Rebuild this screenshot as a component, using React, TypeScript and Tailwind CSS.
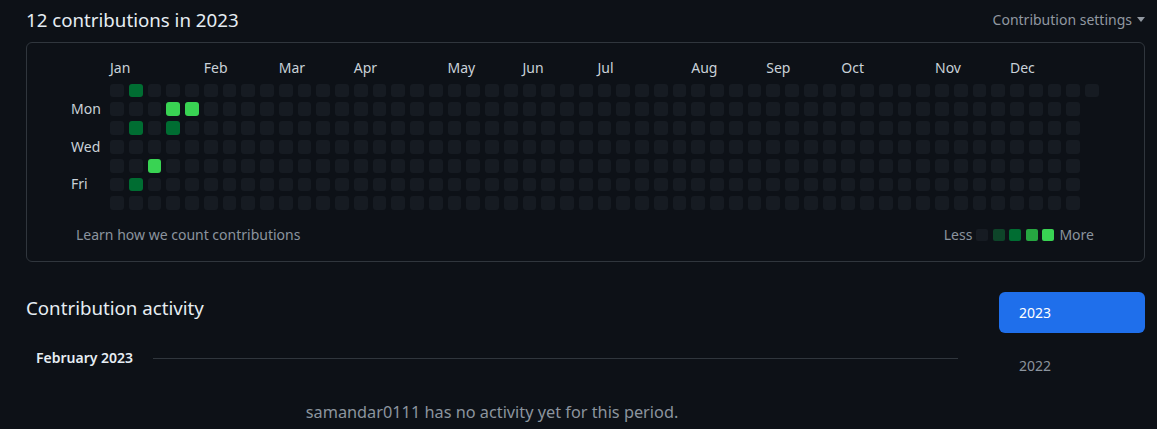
import * as React from 'react';

const MONTHS = [
    { name: 'Jan', col: 0 },
    { name: 'Feb', col: 5 },
    { name: 'Mar', col: 9 },
    { name: 'Apr', col: 13 },
    { name: 'May', col: 18 },
    { name: 'Jun', col: 22 },
    { name: 'Jul', col: 26 },
    { name: 'Aug', col: 31 },
    { name: 'Sep', col: 35 },
    { name: 'Oct', col: 39 },
    { name: 'Nov', col: 44 },
    { name: 'Dec', col: 48 },
];

const DAYS = ['', 'Mon', '', 'Wed', '', 'Fri', ''];

// week-day -> level
const activity: Record<string, number> = {
    '1-0': 2,
    '1-2': 2,
    '1-5': 2,
    '2-4': 4,
    '3-1': 4,
    '3-2': 2,
    '4-1': 4,
};

const levelClass = [
    'bg-[#161b22]',
    'bg-[#0e4429]',
    'bg-[#006d32]',
    'bg-[#26a641]',
    'bg-[#39d353]',
];

const WEEKS = 53;

export default function App() {
    const cells: React.ReactNode[] = [];
    for (let day = 0; day < 7; day++) {
        cells.push(
            <div key={'d' + day} className="text-[14px] leading-[14px] text-[#c9d1d9]">
                {DAYS[day]}
            </div>
        );
        for (let week = 0; week < WEEKS; week++) {
            // 2023 ends on Sunday, so the last week has one day only
            if (week === WEEKS - 1 && day > 0) {
                cells.push(<div key={week + '-' + day} />);
                continue;
            }
            const level = activity[week + '-' + day] ?? 0;
            cells.push(
                <div
                    key={week + '-' + day}
                    className={'w-[13.75px] h-[13.75px] rounded-[3px] ' + levelClass[level]}
                />
            );
        }
    }

    return (
        <div className="min-h-screen bg-[#0d1117] font-['Noto_Sans',sans-serif] pl-[26px] pr-[12px] text-[#c9d1d9]">
            {/* header */}
            <div className="flex items-center justify-between h-[38px] pt-[1px]">
                <h2 className="text-[18.7px] leading-[24px] text-[#e6edf3]">
                    12 contributions in 2023
                </h2>
                <button className="flex items-center gap-[5px] text-[14px] text-[#9198a1]">
                    Contribution settings
                    <svg width="8" height="5" viewBox="0 0 8 5">
                        <path d="M0 0h8L4 5z" fill="#9198a1" />
                    </svg>
                </button>
            </div>

            {/* calendar card */}
            <div className="mt-[4px] border border-[#30363d] rounded-[6px] h-[220px] pt-[15px] pl-[44px] pr-[50px]">
                <div className="grid grid-cols-[34px_repeat(53,13.75px)] gap-x-[5px] h-[20px]">
                    {MONTHS.map((m) => (
                        <div
                            key={m.name}
                            className="text-[14px] leading-[20px] text-[#c9d1d9] whitespace-nowrap"
                            style={{ gridColumnStart: m.col + 2, gridRowStart: 1 }}
                        >
                            {m.name}
                        </div>
                    ))}
                </div>
                <div className="mt-[5.7px] grid grid-cols-[34px_repeat(53,13.75px)] gap-x-[5px] gap-y-[4.9px] items-center">
                    {cells}
                </div>
                <div className="mt-[15px] flex items-center justify-between pl-[5px] text-[14px] leading-[20px] text-[#8b949e]">
                    <span>Learn how we count contributions</span>
                    <div className="flex items-center">
                        <span className="mr-[4px]">Less</span>
                        <div className="flex items-center gap-[4.5px]">
                            {levelClass.map((c, i) => (
                                <div key={i} className={'w-[12px] h-[12px] rounded-[2px] ' + c} />
                            ))}
                        </div>
                        <span className="ml-[5px]">More</span>
                    </div>
                </div>
            </div>

            {/* activity */}
            <div className="mt-[30px] flex">
                <div className="flex-1">
                    <h2 className="mt-[4px] text-[18.7px] leading-[24px] text-[#e6edf3]">
                        Contribution activity
                    </h2>
                    <div className="mt-[28px] flex items-center pl-[10px]">
                        <h3 className="text-[14px] leading-[20px] font-semibold text-[#e6edf3] whitespace-nowrap">
                            February 2023
                        </h3>
                        <div className="ml-[20px] flex-1 h-px bg-[#30363d]" />
                    </div>
                    <p className="mt-[32px] text-center text-[16.3px] leading-[24px] text-[#8b949e]">
                        samandar0111 has no activity yet for this period.
                    </p>
                </div>
                <div className="ml-[41px] w-[146px]">
                    <a className="flex items-center h-[41px] rounded-[6px] bg-[#1f6feb] px-[20px] text-[14px] text-white">
                        2023
                    </a>
                    <a className="mt-[12px] flex items-center h-[41px] px-[20px] text-[14px] text-[#8b949e]">
                        2022
                    </a>
                </div>
            </div>
        </div>
    );
}
